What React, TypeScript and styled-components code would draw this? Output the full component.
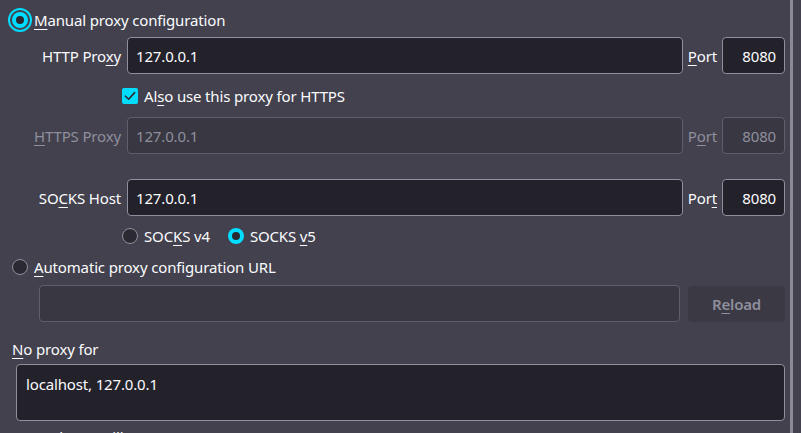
import React from "react";
import styled, { createGlobalStyle, css } from "styled-components";

const Global = createGlobalStyle`
  html, body { margin: 0; padding: 0; background: #42414d; height: 433px; overflow: hidden; }
  body { font-family: "Noto Sans", "Open Sans", sans-serif; font-size: 15px; letter-spacing: -0.15px; color: #fbfbfe; }
  u { text-underline-offset: 3px; text-decoration-thickness: 1px; }
`;

const Page = styled.div`
  position: relative;
  width: 801px;
  box-sizing: border-box;
  padding: 8px 16px 0 12px;
  display: flex;
  flex-direction: column;
  & > * { flex-shrink: 0; }
`;

const ScrollLine = styled.div`
  position: absolute;
  top: 0;
  height: 433px;
  left: 790px;
  width: 3px;
  background: #8b8a94;
`;

const OptionRow = styled.label<{ $h?: number; $indent?: number }>`
  display: flex;
  align-items: center;
  gap: 6px;
  height: ${(p) => p.$h ?? 24}px;
  padding-left: ${(p) => p.$indent ?? 0}px;
  white-space: nowrap;
`;

const Radio = styled.span<{ $checked?: boolean; $focus?: boolean }>`
  width: 16px;
  height: 16px;
  border-radius: 50%;
  box-sizing: border-box;
  flex: none;
  position: relative;
  ${(p) =>
    p.$checked
      ? css`
          background: #00ddff;
          &::after {
            content: "";
            position: absolute;
            left: 4px;
            top: 4px;
            width: 8px;
            height: 8px;
            border-radius: 50%;
            background: #2b2a33;
          }
        `
      : css`
          background: #2b2a33;
          border: 1px solid #8f8f9d;
        `}
  ${(p) =>
    p.$focus &&
    css`
      outline: 2px solid #00ddff;
      outline-offset: 2px;
    `}
`;

const Checkbox = styled.span`
  width: 16px;
  height: 16px;
  border-radius: 2px;
  background: #00ddff;
  flex: none;
  display: flex;
  align-items: center;
  justify-content: center;
`;

const FieldRow = styled.div<{ $top: number }>`
  display: flex;
  align-items: center;
  height: 37px;
  margin-top: ${(p) => p.$top}px;
`;

const FieldLabel = styled.span<{ $disabled?: boolean }>`
  width: 109px;
  text-align: right;
  margin-right: 6px;
  color: ${(p) => (p.$disabled ? "#8f8f9d" : "#fbfbfe")};
  white-space: nowrap;
`;

const TextBox = styled.div<{ $disabled?: boolean; $align?: string; $w?: number }>`
  box-sizing: border-box;
  height: 37px;
  border-radius: 4px;
  padding: 0 8px;
  display: flex;
  align-items: center;
  justify-content: ${(p) => (p.$align === "right" ? "flex-end" : "flex-start")};
  ${(p) => (p.$w ? css`width: ${p.$w}px; flex: none;` : css`flex: 1;`)}
  background: ${(p) => (p.$disabled ? "#383742" : "#23222b")};
  border: 1px solid ${(p) => (p.$disabled ? "#5f5e69" : "#8f8f9d")};
  color: ${(p) => (p.$disabled ? "#8f8f9d" : "#fbfbfe")};
`;

const PortLabel = styled.span<{ $disabled?: boolean }>`
  margin: 0 5px;
  color: ${(p) => (p.$disabled ? "#8f8f9d" : "#fbfbfe")};
`;

const Gap = styled.div<{ $h: number }>`
  height: ${(p) => p.$h}px;
`;

const SocksRow = styled.div`
  display: flex;
  align-items: center;
  height: 22px;
  padding-left: 110px;
  gap: 18px;
`;

const UrlRow = styled.div`
  display: flex;
  align-items: center;
  gap: 8px;
  padding-left: 27px;
  height: 37px;
`;

const ReloadButton = styled.div`
  width: 97px;
  height: 36px;
  flex: none;
  border-radius: 4px;
  background: #3a3944;
  color: #8f8f9d;
  font-weight: 600;
  display: flex;
  align-items: center;
  justify-content: center;
`;

const SectionLabel = styled.div`
  height: 22px;
  display: flex;
  align-items: center;
`;

const TextArea = styled.div`
  box-sizing: border-box;
  margin-left: 4px;
  height: 57px;
  border: 1px solid #8f8f9d;
  border-radius: 4px;
  background: #23222b;
  padding: 9px 9px;
  line-height: 20px;
`;

const Example = styled.div`
  margin-top: 6px;
  white-space: nowrap;
`;

const Check = () => (
  <svg width="14" height="14" viewBox="0 0 14 14">
    <path d="M2.5 7.2 L5.6 10.2 L11.6 3.6" fill="none" stroke="#2b2a33" strokeWidth="1.6" strokeLinecap="round" strokeLinejoin="round" />
  </svg>
);

export default function App() {
  return (
    <>
      <Global />
      <Page>
        <OptionRow>
          <Radio $checked $focus />
          <span>
            <u>M</u>anual proxy configuration
          </span>
        </OptionRow>
        <FieldRow $top={5}>
          <FieldLabel>
            HTTP Pro<u>x</u>y
          </FieldLabel>
          <TextBox>127.0.0.1</TextBox>
          <PortLabel>
            <u>P</u>ort
          </PortLabel>
          <TextBox $w={63} $align="right">8080</TextBox>
        </FieldRow>
        <Gap $h={11} />
        <OptionRow $h={22} $indent={110}>
          <Checkbox>
            <Check />
          </Checkbox>
          <span>
            Al<u>s</u>o use this proxy for HTTPS
          </span>
        </OptionRow>
        <FieldRow $top={10}>
          <FieldLabel $disabled>
            <u>H</u>TTPS Proxy
          </FieldLabel>
          <TextBox $disabled>127.0.0.1</TextBox>
          <PortLabel $disabled>
            P<u>o</u>rt
          </PortLabel>
          <TextBox $disabled $w={63} $align="right">8080</TextBox>
        </FieldRow>
        <FieldRow $top={25}>
          <FieldLabel>
            SO<u>C</u>KS Host
          </FieldLabel>
          <TextBox>127.0.0.1</TextBox>
          <PortLabel>
            Por<u>t</u>
          </PortLabel>
          <TextBox $w={63} $align="right">8080</TextBox>
        </FieldRow>
        <Gap $h={9} />
        <SocksRow>
          <OptionRow $h={22}>
            <Radio />
            <span>
              SOC<u>K</u>S v4
            </span>
          </OptionRow>
          <OptionRow $h={22}>
            <Radio $checked />
            <span>
              SOCKS <u>v</u>5
            </span>
          </OptionRow>
        </SocksRow>
        <Gap $h={9} />
        <OptionRow $h={22}>
          <Radio />
          <span>
            <u>A</u>utomatic proxy configuration URL
          </span>
        </OptionRow>
        <Gap $h={7} />
        <UrlRow>
          <TextBox $disabled />
          <ReloadButton>
            <span>
              R<u>e</u>load
            </span>
          </ReloadButton>
        </UrlRow>
        <Gap $h={16} />
        <SectionLabel>
          <span>
            <u>N</u>o proxy for
          </span>
        </SectionLabel>
        <Gap $h={4} />
        <TextArea>localhost, 127.0.0.1</TextArea>
        <Example>Example: .mozilla.org, .net.nz, 192.168.1.0/24</Example>
        <ScrollLine />
      </Page>
    </>
  );
}
